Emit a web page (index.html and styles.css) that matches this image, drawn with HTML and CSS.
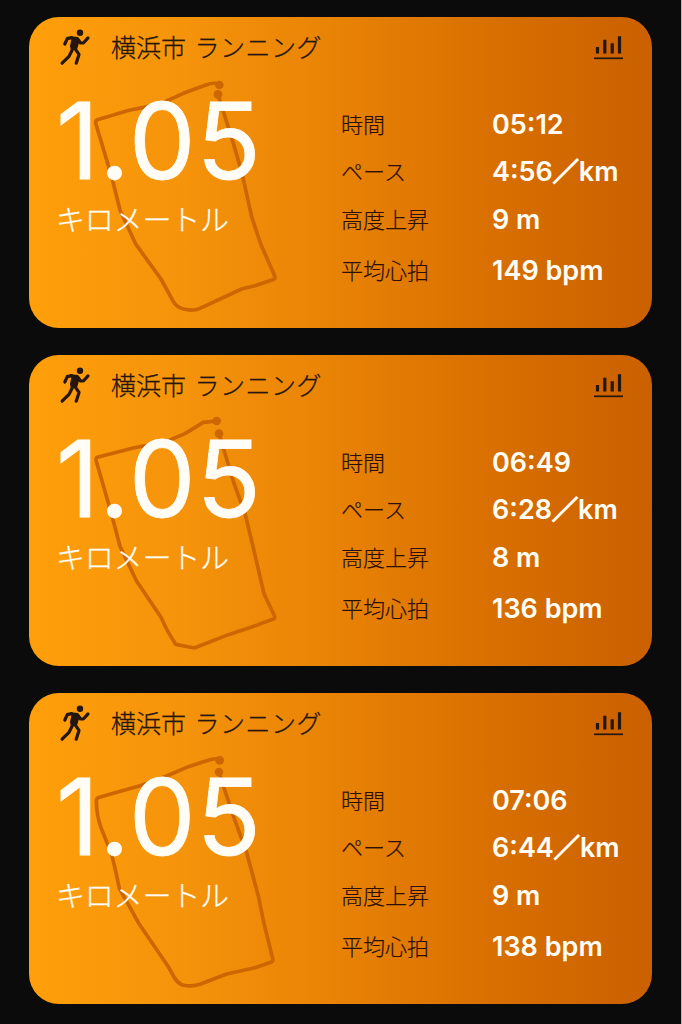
FILE: index.html
```html
<!doctype html>
<html lang="ja">
<head>
<meta charset="utf-8">
<meta name="viewport" content="width=device-width, initial-scale=1.0">
<link rel="stylesheet" href="styles.css">
<title>ランニング</title>
</head>
<body>
<svg class="defs" width="0" height="0">
<symbol id="runner" viewBox="0 0 50 50">
<circle cx="30" cy="10.8" r="3.2" fill="currentColor"/>
<path d="M21 15.2 L27.6 16 L28.6 18.6 L26.4 26.2 L21.6 27 L21 24 L22.4 17.5 Z" fill="currentColor" stroke="currentColor" stroke-width="2" stroke-linejoin="round"/>
<path d="M21.5 15.6 L17.3 16.6 L14.8 22 M28 17.4 L30.6 21 L33.6 20.8 L38 15.9 M22.2 28 L19 34.4 L12.1 41.2 M24.8 26.4 L29 32.4 L26.2 41.2" fill="none" stroke="currentColor" stroke-width="3.2" stroke-linecap="round" stroke-linejoin="round"/>
</symbol>
<symbol id="chart" viewBox="0 0 30 26">
<path d="M3.5 11 V17.5 M10.8 3.7 V17.5 M18.2 7.3 V17.5 M25.5 0.3 V17.5" fill="none" stroke="currentColor" stroke-width="3.2"/>
<path d="M0 22.3 H29" stroke="currentColor" stroke-width="1.7"/>
</symbol>
</svg>

<div class="list">
<section class="card">
<svg class="route" viewBox="0 0 780 780">
<path d="M538 45 Q525 35 500 44 L430 70 L380 93 Q340 108 270 120 L172 149 Q165 151 168 163 L215 320 L240 420 L286 520 L325 575 L363 627 L400 695 Q410 711 430 717 Q458 724 478 716 L605 657 L645 647 L702 628 Q708 625 702 613 L662 522 L635 440 L606 310 L580 220 L534 73"/>
<circle cx="538" cy="45" r="13"/><circle cx="534" cy="73" r="13"/>
</svg>
<header class="head">
<svg class="runner"><use href="#runner"/></svg>
<h2>横浜市 <span class="kana">ランニング</span></h2>
<svg class="chart"><use href="#chart"/></svg>
</header>
<div class="content">
<div class="distance">
<p class="number"><span>1</span><span>.</span><span class="zero">0</span><span>5</span></p>
<p class="unit">キロメートル</p>
</div>
<dl class="stats">
<dt>時間</dt><dd>05:12</dd>
<dt>ペース</dt><dd>4:56<span class="slash">／</span>km</dd>
<dt>高度上昇</dt><dd>9 m</dd>
<dt>平均心拍</dt><dd>149 bpm</dd>
</dl>
</div>
</section>

<section class="card">
<svg class="route" viewBox="0 0 780 780">
<path d="M530 39 L490 43 L435 77 L380 100 L280 120 L172 148 Q166 150 169 160 L215 320 L240 415 L290 520 L363 628 L382 668 L407 709 L463 720 L565 680 L635 657 L702 632 Q707 629 702 620 L672 557 L640 420 L616 320 L580 220 L537 77"/>
<circle cx="530" cy="39" r="13"/><circle cx="537" cy="77" r="13"/>
</svg>
<header class="head">
<svg class="runner"><use href="#runner"/></svg>
<h2>横浜市 <span class="kana">ランニング</span></h2>
<svg class="chart"><use href="#chart"/></svg>
</header>
<div class="content">
<div class="distance">
<p class="number"><span>1</span><span>.</span><span class="zero">0</span><span>5</span></p>
<p class="unit">キロメートル</p>
</div>
<dl class="stats">
<dt>時間</dt><dd>06:49</dd>
<dt>ペース</dt><dd>6:28<span class="slash">／</span>km</dd>
<dt>高度上昇</dt><dd>8 m</dd>
<dt>平均心拍</dt><dd>136 bpm</dd>
</dl>
</div>
</section>

<section class="card">
<svg class="route" viewBox="0 0 780 780">
<path d="M539 43 Q532 33 500 44 L445 62 L380 90 L300 119 L178 154 Q169 157 169 165 Q170 210 183 245 L215 325 L228 380 L238 427 L262 470 L298 535 L385 662 L402 693 Q411 709 425 716 Q455 724 480 715 L560 684 L645 665 L695 648 Q700 646 698 638 L672 532 L655 450 L620 320 L583 218 L550 120 L537 78"/>
<circle cx="539" cy="43" r="13"/><circle cx="537" cy="78" r="13"/>
</svg>
<header class="head">
<svg class="runner"><use href="#runner"/></svg>
<h2>横浜市 <span class="kana">ランニング</span></h2>
<svg class="chart"><use href="#chart"/></svg>
</header>
<div class="content">
<div class="distance">
<p class="number"><span>1</span><span>.</span><span class="zero">0</span><span>5</span></p>
<p class="unit">キロメートル</p>
</div>
<dl class="stats">
<dt>時間</dt><dd>07:06</dd>
<dt>ペース</dt><dd>6:44<span class="slash">／</span>km</dd>
<dt>高度上昇</dt><dd>9 m</dd>
<dt>平均心拍</dt><dd>138 bpm</dd>
</dl>
</div>
</section>
</div>
</body>
</html>
```
FILE: styles.css
```css
* {
    box-sizing: border-box;
}
h2,
p,
dl,
dt,
dd {
    margin: 0;
    padding: 0;
}
body {
    margin: 0;
    height: 1024px;
    overflow: hidden;
    background-color: #0b0b0b;
    border-right: 1px solid #b8b8b8;
    font-family: Inter, "Noto Sans CJK JP", sans-serif;
    color: #fffdf5;
}
.defs {
    display: block;
}
.list {
    display: flex;
    flex-direction: column;
    gap: 27px;
    padding: 17px 29px 0 29px;
}
.card {
    position: relative;
    width: 623px;
    height: 311px;
    border-radius: 30px;
    background: linear-gradient(90deg, #ff9f0a 0%, #f5930b 25%, #e88205 50%, #d97000 73%, #ca6000 100%);
}
/* track of the run, drawn under the numbers */
.route {
    position: absolute;
    left: 11px;
    top: 53px;
    width: 260px;
    height: 260px;
    fill: none;
    stroke: #cc6600;
    stroke-width: 11;
    stroke-linejoin: round;
}
.route circle {
    fill: #cc6600;
    stroke: none;
}
.head {
    position: relative;
    display: flex;
    height: 62px;
    padding: 5px 28px 0 21px;
    color: #25160f;
}
.head h2 {
    flex: 1;
    padding: 5px 0 0 11px;
    font: 300 25px/38px "Noto Sans CJK JP", sans-serif;
    -webkit-text-stroke: 0.3px;
}
.kana {
    margin-left: 3px;
    letter-spacing: 0.5px;
}
.runner {
    width: 50px;
    height: 50px;
}
.chart {
    width: 30px;
    height: 26px;
    margin-top: 14px;
}
.content {
    position: relative;
    display: flex;
}
.distance {
    width: 312px;
    padding: 9px 0 0 27px;
}
.number {
    display: flex;
    font-size: 106px;
    line-height: 106px;
    font-weight: 400;
    -webkit-text-stroke: 0.8px;
}
.zero {
    margin-left: -1px;
    margin-right: 1px;
}
.unit {
    font: 300 29px/40px "Noto Sans CJK JP", sans-serif;
    margin-top: 4px;
    letter-spacing: -0.2px;
    -webkit-text-stroke: 0.3px;
}
.stats {
    display: grid;
    grid-template-columns: 151px 160px;
    grid-template-rows: 47px 48px 51px 50px;
    padding-top: 23px;
    line-height: 46px;
}
.stats dt {
    margin-top: -2px;
    font: 300 22px/46px "Noto Sans CJK JP", sans-serif;
    color: #2b0f08;
    -webkit-text-stroke: 0.2px;
}
.stats dd {
    font-size: 27px;
    font-weight: 600;
    white-space: nowrap;
}
.slash {
    font-family: "Noto Sans CJK JP", sans-serif;
    font-size: 26px;
    line-height: 1;
    -webkit-text-stroke: 1.4px;
}
```
